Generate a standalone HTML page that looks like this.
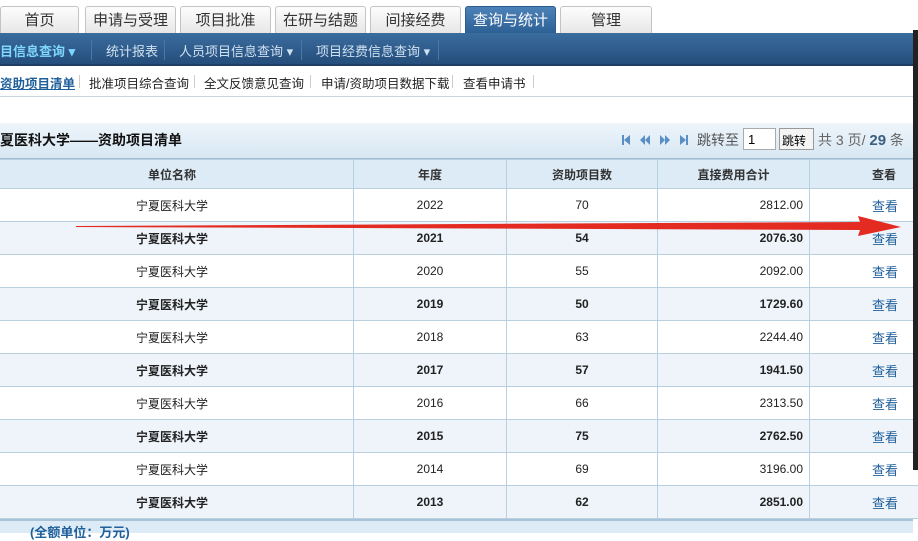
<!DOCTYPE html>
<html><head><meta charset="utf-8"><style>
*{margin:0;padding:0;box-sizing:border-box}
body{width:918px;height:533px;overflow:hidden;background:#fff;font-family:"Liberation Sans","Noto Sans CJK SC",sans-serif;position:relative}
.tab{position:absolute;top:6px;height:28px;border:1px solid #c4c4c4;border-bottom:none;border-radius:3px 3px 0 0;background:linear-gradient(#fdfdfd,#e6e6e6);font-size:15px;color:#333;text-align:center;line-height:27px}
.tab.on{background:linear-gradient(#4d82b8,#2c5f94);color:#fff;border-color:#2b5d90}
.nav{position:absolute;top:33px;left:0;width:913px;height:33px;background:linear-gradient(#3b6d9f,#244e7b);border-bottom:2px solid #1d3f63}
.nav span{position:absolute;top:8px;font-size:13px;color:#cfe0f0}
.nav i{position:absolute;top:7px;width:1px;height:20px;background:#1a3a5c;border-right:1px solid #4a78a6}
.sub{position:absolute;top:67px;left:0;width:913px;height:30px;border-bottom:1px solid #c9d5e0;font-size:12.5px;color:#222}
.sub span{position:absolute;top:6px}
.sub i{position:absolute;top:8px;width:1px;height:13px;background:#ccc}
.title{position:absolute;top:123px;left:0;width:913px;height:36px;background:linear-gradient(#eef5fb,#d7e7f3);border-bottom:1px solid #9fbcd4}
table{position:absolute;top:159px;left:-10px;width:979px;border-collapse:collapse;font-size:12px;color:#222;table-layout:fixed}
td,th{border:1px solid #b8d0e0;height:33px;text-align:center}
th{background:#dcebf6;color:#333;font-weight:bold}
tr:nth-child(odd) td{background:#eef4fa}
tr.b td{font-weight:bold}
tr.b td.l{font-weight:normal}
td.r{text-align:right;padding-right:6px}
td.l{color:#1f5f9a;font-size:13px;text-align:left;padding-left:62px}
th.l{text-align:left;padding-left:62px}
.dark{position:absolute;left:913px;top:30px;width:5px;height:440px;background:#222}
</style></head><body>
<div class="tab" style="left:0;width:79px">首页</div>
<div class="tab" style="left:85px;width:91px">申请与受理</div>
<div class="tab" style="left:180px;width:91px">项目批准</div>
<div class="tab" style="left:275px;width:91px">在研与结题</div>
<div class="tab" style="left:370px;width:91px">间接经费</div>
<div class="tab on" style="left:465px;width:91px">查询与统计</div>
<div class="tab" style="left:560px;width:92px">管理</div>
<div class="nav">
<span style="left:0;color:#7fd7ff;font-weight:bold">目信息查询 ▾</span><i style="left:91px"></i>
<span style="left:106px">统计报表</span><i style="left:164px"></i>
<span style="left:179px">人员项目信息查询 ▾</span><i style="left:301px"></i>
<span style="left:316px">项目经费信息查询 ▾</span><i style="left:438px"></i>
</div>
<div class="sub">
<span style="left:0;color:#1f5f9a;font-weight:bold;text-decoration:underline">资助项目清单</span><i style="left:79px"></i>
<span style="left:89px">批准项目综合查询</span><i style="left:194px"></i>
<span style="left:204px">全文反馈意见查询</span><i style="left:310px"></i>
<span style="left:321px">申请/资助项目数据下载</span><i style="left:452px"></i>
<span style="left:463px">查看申请书</span><i style="left:533px"></i>
</div>
<div class="title">
<span style="position:absolute;left:0;top:7px;font-size:14px;font-weight:bold;color:#111">夏医科大学——资助项目清单</span>
<svg style="position:absolute;left:622px;top:11px" width="70" height="12" fill="#5a8fc4"><rect x="0" y="1" width="2" height="10"/><path d="M2 6 L8 1 L8 11Z"/><path d="M18 6 L23 1 L23 11Z M23 6 L28 1 L28 11Z"/><path d="M38 1 L43 6 L38 11Z M43 1 L48 6 L43 11Z"/><path d="M58 1 L64 6 L58 11Z"/><rect x="64" y="1" width="2" height="10"/></svg>
<span style="position:absolute;left:697px;top:7px;font-size:14px;color:#555">跳转至</span>
<div style="position:absolute;left:743px;top:5px;width:33px;height:22px;border:1px solid #aaa;background:#fff;font-size:13px;padding:3px 4px">1</div>
<div style="position:absolute;left:779px;top:5px;width:35px;height:22px;border:1px solid #999;background:#f4f4f4;font-size:12px;padding:3px 2px">跳转</div>
<span style="position:absolute;left:818px;top:7px;font-size:14px;color:#666">共 3 页/ <b style="color:#3a5f80;font-size:15px">29</b> 条</span>
</div>
<table>
<colgroup><col style="width:363px"><col style="width:153px"><col style="width:151px"><col style="width:152px"><col style="width:160px"></colgroup>
<tr><th style="height:29px">单位名称</th><th style="height:29px">年度</th><th style="height:29px">资助项目数</th><th style="height:29px">直接费用合计</th><th class="l" style="height:29px">查看</th></tr>
<tr><td>宁夏医科大学</td><td>2022</td><td>70</td><td class="r">2812.00</td><td class="l">查看</td></tr>
<tr class="b"><td>宁夏医科大学</td><td>2021</td><td>54</td><td class="r">2076.30</td><td class="l">查看</td></tr>
<tr><td>宁夏医科大学</td><td>2020</td><td>55</td><td class="r">2092.00</td><td class="l">查看</td></tr>
<tr class="b"><td>宁夏医科大学</td><td>2019</td><td>50</td><td class="r">1729.60</td><td class="l">查看</td></tr>
<tr><td>宁夏医科大学</td><td>2018</td><td>63</td><td class="r">2244.40</td><td class="l">查看</td></tr>
<tr class="b"><td>宁夏医科大学</td><td>2017</td><td>57</td><td class="r">1941.50</td><td class="l">查看</td></tr>
<tr><td>宁夏医科大学</td><td>2016</td><td>66</td><td class="r">2313.50</td><td class="l">查看</td></tr>
<tr class="b"><td>宁夏医科大学</td><td>2015</td><td>75</td><td class="r">2762.50</td><td class="l">查看</td></tr>
<tr><td>宁夏医科大学</td><td>2014</td><td>69</td><td class="r">3196.00</td><td class="l">查看</td></tr>
<tr class="b"><td>宁夏医科大学</td><td>2013</td><td>62</td><td class="r">2851.00</td><td class="l">查看</td></tr>
</table>
<div style="position:absolute;left:0;top:519px;width:913px;height:14px;background:#dcebf6;border-top:2px solid #a9c4da"></div>
<span style="position:absolute;left:30px;top:522px;font-size:13px;color:#1f5f9a;font-weight:bold">(全额单位：万元)</span>
<div class="dark"></div>
<svg style="position:absolute;left:0;top:0" width="918" height="533"><polygon points="76,226 860,222 858,216 901,227 858,236 860,230 76,227" fill="#e32b22"/></svg>
</body></html>
